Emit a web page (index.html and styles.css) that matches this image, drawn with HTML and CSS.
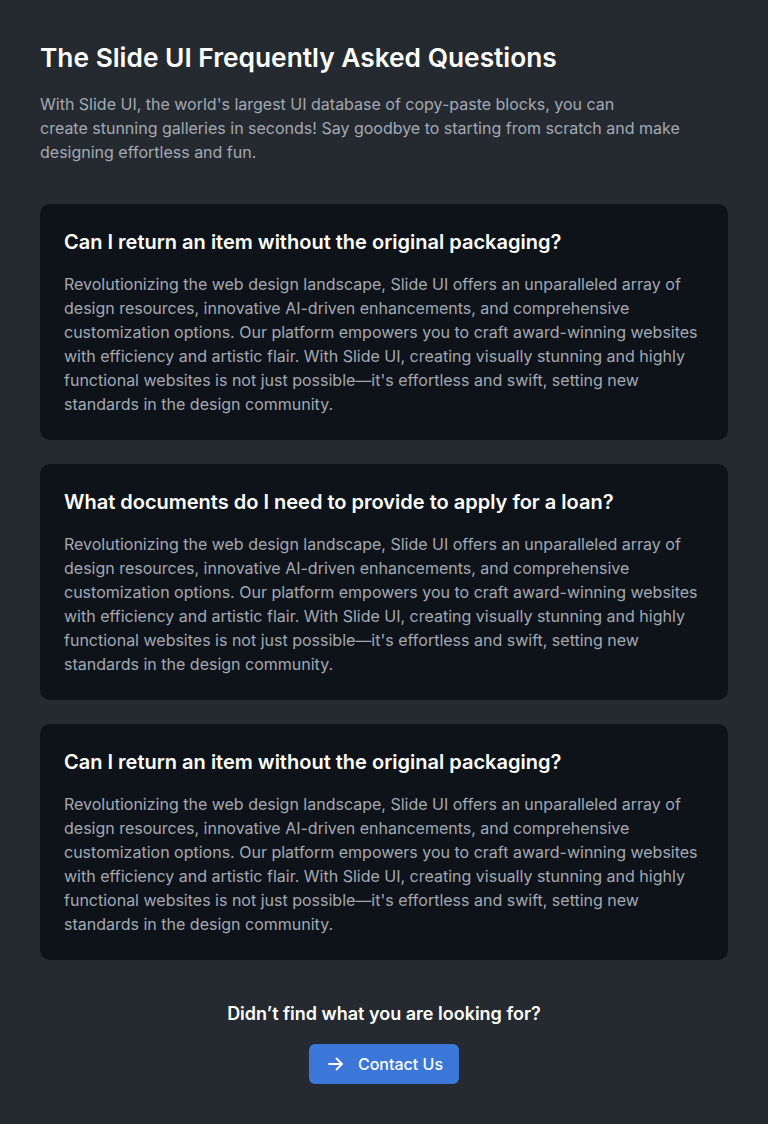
FILE: index.html
```html
<!DOCTYPE html>
<html lang="en">
<head>
<meta charset="utf-8">
<title>FAQ</title>
<link rel="stylesheet" href="styles.css">
</head>
<body>
<main class="page">
  <header class="intro">
    <h1 class="title">The Slide UI Frequently Asked Questions</h1>
    <p class="lead">With Slide UI, the world's largest UI database of copy-paste blocks, you can<br>create stunning galleries in seconds! Say goodbye to starting from scratch and make designing effortless and fun.</p>
  </header>
  <section class="list">
    <article class="card">
      <h2 class="q">Can I return an item without the original packaging?</h2>
      <p class="a">Revolutionizing the web design landscape, Slide UI offers an unparalleled array of design resources, innovative AI-driven enhancements, and comprehensive customization options. Our platform empowers you to craft award-winning websites with efficiency and artistic flair. With Slide UI, creating visually stunning and highly functional websites is not just possible—it's effortless and swift, setting new standards in the design community.</p>
    </article>
    <article class="card">
      <h2 class="q">What documents do I need to provide to apply for a loan?</h2>
      <p class="a">Revolutionizing the web design landscape, Slide UI offers an unparalleled array of design resources, innovative AI-driven enhancements, and comprehensive customization options. Our platform empowers you to craft award-winning websites with efficiency and artistic flair. With Slide UI, creating visually stunning and highly functional websites is not just possible—it's effortless and swift, setting new standards in the design community.</p>
    </article>
    <article class="card">
      <h2 class="q">Can I return an item without the original packaging?</h2>
      <p class="a">Revolutionizing the web design landscape, Slide UI offers an unparalleled array of design resources, innovative AI-driven enhancements, and comprehensive customization options. Our platform empowers you to craft award-winning websites with efficiency and artistic flair. With Slide UI, creating visually stunning and highly functional websites is not just possible—it's effortless and swift, setting new standards in the design community.</p>
    </article>
  </section>
  <footer class="cta">
    <p class="cta-text">Didn’t find what you are looking for?</p>
    <a class="btn" href="#">
      <svg class="btn-icon" viewBox="0 0 20 20" width="20" height="20" fill="none" stroke="currentColor" stroke-width="1.8" stroke-linecap="round" stroke-linejoin="round"><path d="M4 10h13"/><path d="M11.5 4.5L17 10l-5.5 5.5"/></svg>
      <span>Contact Us</span>
    </a>
  </footer>
</main>
</body>
</html>
```

FILE: styles.css
```css
* { box-sizing: border-box; }
html, body { margin: 0; padding: 0; }
body {
  background: #252a31;
  font-family: Inter, "Noto Sans", sans-serif;
  color: #fff;
  min-height: 1124px;
}
.page {
  padding: 40px 40px 40px;
  display: flex;
  flex-direction: column;
}
.title {
  margin: 0;
  font-size: 26.3px;
  line-height: 36px;
  font-weight: 600;
  color: #fff;
}
.lead {
  margin: 16px 0 0;
  max-width: 660px;
  font-size: 16px;
  line-height: 24px;
  color: #a3a9b2;
}
.list {
  margin-top: 40px;
  display: flex;
  flex-direction: column;
  gap: 24px;
}
.card {
  background: #0e131a;
  border-radius: 10px;
  padding: 24px;
}
.q {
  margin: 0;
  font-size: 20px;
  line-height: 28px;
  font-weight: 600;
  color: #fff;
}
.a {
  margin: 16px 0 0;
  font-size: 16px;
  line-height: 24px;
  color: #a3a9b2;
}
.cta {
  margin-top: 40px;
  display: flex;
  flex-direction: column;
  align-items: center;
}
.cta-text {
  margin: 0;
  font-size: 18px;
  line-height: 28px;
  font-weight: 600;
  color: #fff;
}
.btn {
  margin-top: 16px;
  display: inline-flex;
  align-items: center;
  gap: 13px;
  height: 40px;
  padding: 0 16px;
  background: #3b76d9;
  color: #fff;
  border-radius: 6px;
  text-decoration: none;
  font-size: 16px;
  font-weight: 500;
}
.btn-icon { display: block; }
```
